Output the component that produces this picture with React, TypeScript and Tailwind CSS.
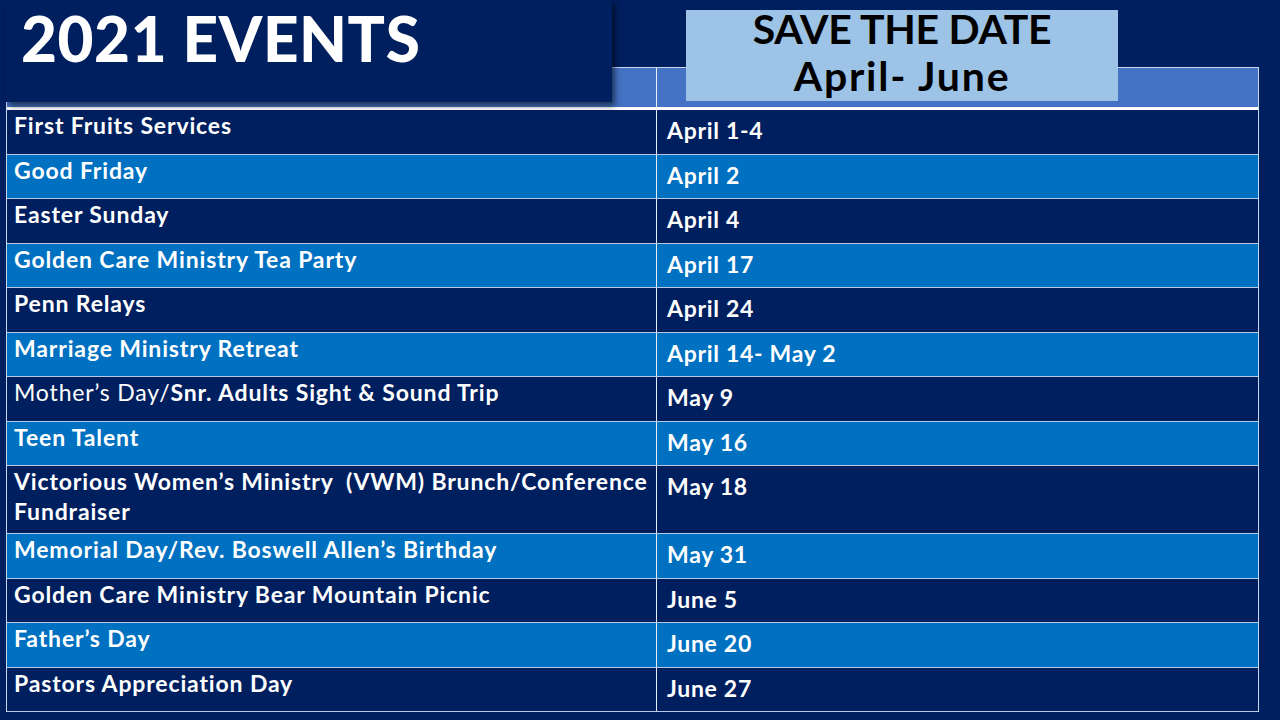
import React from "react";

type Row = { name: React.ReactNode; date: string; tall?: boolean };

const rows: Row[] = [
  { name: "First Fruits Services", date: "April 1-4" },
  { name: "Good Friday", date: "April 2" },
  { name: "Easter Sunday", date: "April 4" },
  { name: "Golden Care Ministry Tea Party", date: "April 17" },
  { name: "Penn Relays", date: "April 24" },
  { name: "Marriage Ministry Retreat", date: "April 14- May 2" },
  {
    name: (
      <>
        <span className="font-normal">Mother’s Day/</span>
        <span>Snr. Adults Sight &amp; Sound Trip</span>
      </>
    ),
    date: "May 9",
  },
  { name: "Teen Talent", date: "May 16" },
  {
    name: (
      <>
        Victorious Women’s Ministry&nbsp; (VWM) Brunch/Conference
        <br />
        Fundraiser
      </>
    ),
    date: "May 18",
    tall: true,
  },
  { name: "Memorial Day/Rev. Boswell Allen’s Birthday", date: "May 31" },
  { name: "Golden Care Ministry Bear Mountain Picnic", date: "June 5" },
  { name: "Father’s Day", date: "June 20" },
  { name: "Pastors Appreciation Day", date: "June 27" },
];

export default function App() {
  return (
    <div
      className="relative w-[1280px] h-[720px] overflow-hidden bg-[#001f5f] text-white"
      style={{ fontFamily: "Lato, 'Noto Sans', sans-serif" }}
    >
      <div className="ml-[6px] mt-[67px] w-[1253px] border-l border-r border-[#c9d8ef]">
        <div className="flex h-[40px] bg-[#4472c4] border-t border-[#c9d8ef]">
          <div className="w-[650px] border-r border-[#e6eefa]" />
          <div className="flex-1" />
        </div>
        <div className="h-[3px] bg-white" />
        {rows.map((r, i) => (
          <div
            key={i}
            className={`flex border-b border-[#b7cbe8] ${r.tall ? "h-[68px]" : "h-[44.5px]"} ${
              i % 2 === 0 ? "bg-[#001f5f]" : "bg-[#0070c0]"
            }`}
          >
            <div className="w-[650px] border-r border-[#e6eefa] pl-[7px] pt-0 text-[23px] leading-[30px] font-bold tracking-[0.85px] whitespace-nowrap">
              {r.name}
            </div>
            <div className="flex-1 pl-[10px] pt-[5px] text-[23px] leading-[30px] font-bold tracking-[0.7px] whitespace-nowrap">
              {r.date}
            </div>
          </div>
        ))}
      </div>

      <div className="absolute left-[6px] top-0 w-[606px] h-[102px] bg-[#001f5f] shadow-[3px_4px_6px_rgba(0,0,0,0.55)]">
        <div className="pl-[15px] pt-0 text-[62px] leading-[76px] font-black tracking-[0.6px]">
          2021 EVENTS
        </div>
      </div>

      <div className="absolute left-[686px] top-[10px] w-[432px] h-[91px] bg-[#9dc3e6] text-black flex flex-col items-center">
        <div className="-mt-[5px] text-[41px] leading-[47px] font-bold tracking-[-0.3px]">SAVE THE DATE</div>
        <div className="text-[41px] leading-[47px] font-bold tracking-[1.8px]">April- June</div>
      </div>
    </div>
  );
}
